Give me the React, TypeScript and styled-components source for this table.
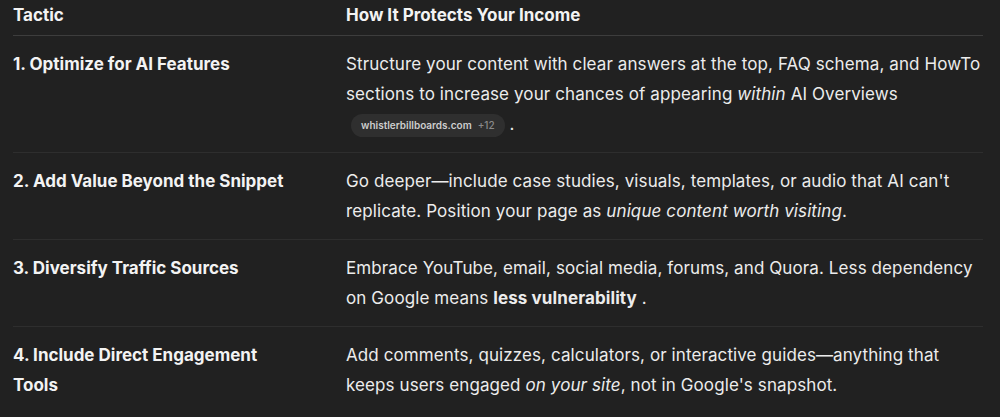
import React from "react";
import styled, { createGlobalStyle } from "styled-components";

const Global = createGlobalStyle`
  html, body {
    margin: 0;
    padding: 0;
    background: #212121;
  }
  body {
    font-family: Inter, "Noto Sans", "Liberation Sans", sans-serif;
    color: #ececec;
    -webkit-font-smoothing: antialiased;
  }
`;

const Wrap = styled.div`
  padding: 0 17px 0 13px;
  background: #212121;
  min-height: 417px;
  box-sizing: border-box;
`;

const Table = styled.table`
  width: 100%;
  border-collapse: collapse;
  font-size: 17px;
  line-height: 30px;
`;

const HeadCell = styled.th<{ $w?: number }>`
  text-align: left;
  font-weight: 650;
  color: #f3f3f3;
  padding: 0 0 5px 0;
  border-bottom: 1px solid #3d3d3d;
  width: ${(p) => (p.$w ? `${p.$w}px` : "auto")};
`;

const Row = styled.tr<{ $last?: boolean }>`
  border-bottom: ${(p) => (p.$last ? "none" : "1px solid #2e2e2e")};
`;

const TacticCell = styled.td`
  vertical-align: top;
  font-weight: 700;
  color: #f3f3f3;
  padding: 13px 40px 13px 0;
`;

const DescCell = styled.td`
  vertical-align: top;
  font-weight: 400;
  color: #ececec;
  padding: 13px 0;
  letter-spacing: 0.1px;
`;

const Chip = styled.span`
  display: inline-flex;
  align-items: center;
  height: 23px;
  padding: 0 10px;
  margin-left: 5px;
  border-radius: 12px;
  background: #2f2f2f;
  font-size: 10px;
  font-weight: 600;
  line-height: 23px;
  letter-spacing: 0;
  color: #cdcdcd;
  vertical-align: middle;
`;

const ChipCount = styled.span`
  margin-left: 6px;
  font-weight: 500;
  color: #8a8a8a;
`;

const rows = [
  {
    tactic: "1. Optimize for AI Features",
    desc: (
      <>
        Structure your content with clear answers at the top, FAQ schema, and HowTo sections to
        increase your chances of appearing <em>within</em> AI Overviews{" "}
        <Chip>
          whistlerbillboards.com<ChipCount>+12</ChipCount>
        </Chip>{" "}
        .
      </>
    ),
  },
  {
    tactic: "2. Add Value Beyond the Snippet",
    desc: (
      <>
        Go deeper—include case studies, visuals, templates, or audio that AI can't replicate.
        Position your page as <em>unique content worth visiting</em>.
      </>
    ),
  },
  {
    tactic: "3. Diversify Traffic Sources",
    desc: (
      <>
        Embrace YouTube, email, social media, forums, and Quora. Less dependency on Google means{" "}
        <strong>less vulnerability</strong> .
      </>
    ),
  },
  {
    tactic: "4. Include Direct Engagement Tools",
    desc: (
      <>
        Add comments, quizzes, calculators, or interactive guides—anything that keeps users
        engaged <em>on your site</em>, not in Google's snapshot.
      </>
    ),
  },
];

export default function App() {
  return (
    <Wrap>
      <Global />
      <Table>
        <thead>
          <tr>
            <HeadCell $w={333}>Tactic</HeadCell>
            <HeadCell>How It Protects Your Income</HeadCell>
          </tr>
        </thead>
        <tbody>
          {rows.map((r, i) => (
            <Row key={i} $last={i === rows.length - 1}>
              <TacticCell>{r.tactic}</TacticCell>
              <DescCell>{r.desc}</DescCell>
            </Row>
          ))}
        </tbody>
      </Table>
    </Wrap>
  );
}
